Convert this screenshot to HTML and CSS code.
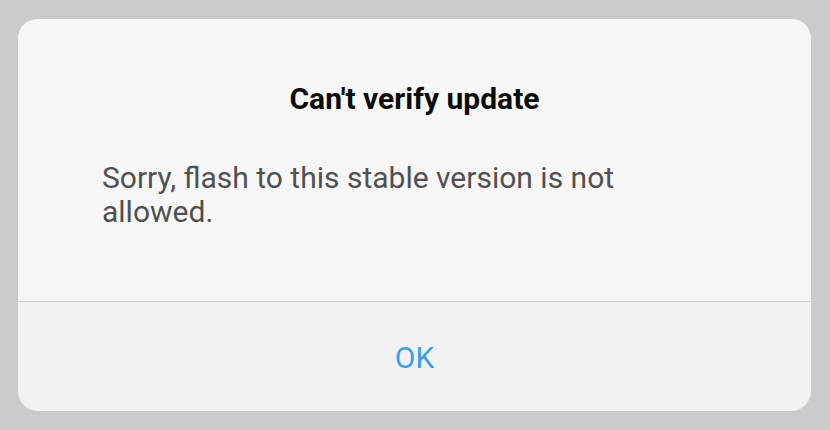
FILE: index.html
```html
<!DOCTYPE html>
<html>
<head>
<meta charset="utf-8">
<link rel="stylesheet" href="styles.css">
</head>
<body>
<div class="dialog">
  <div class="content">
    <h1 class="title">Can't verify update</h1>
    <p class="message">Sorry, flash to this stable version is not allowed.</p>
  </div>
  <div class="actions">
    <button class="ok">OK</button>
  </div>
</div>
</body>
</html>
```
FILE: styles.css
```css
html, body {
  margin: 0;
  padding: 0;
  background: #cbcbcb;
  width: 830px;
  height: 430px;
  overflow: hidden;
  font-family: Roboto, "Noto Sans", sans-serif;
}
.dialog {
  margin: 19px 0 0 18px;
  width: 793px;
  height: 392px;
  border-radius: 20px;
  background: #f2f2f2;
  overflow: hidden;
  display: flex;
  flex-direction: column;
}
.content {
  box-sizing: border-box;
  background: #f7f7f7;
  border-bottom: 1px solid #cfcfcf;
  padding: 62px 90px 0 84px;
  flex: none;
  height: 283px;
}
.title {
  margin: 0;
  font-size: 30px;
  line-height: 36px;
  font-weight: 700;
  color: #0c0c0c;
  text-align: center;
  padding-left: 6px;
}
.message {
  margin: 44px 0 0;
  font-size: 30px;
  line-height: 34px;
  color: #505050;
  font-weight: 400;
  width: 560px;
}
.actions {
  flex: 1;
  display: flex;
  align-items: center;
  justify-content: center;
  padding-top: 2px;
}
.ok {
  border: 0;
  background: none;
  font-family: inherit;
  font-size: 30px;
  line-height: 34px;
  color: #3b9fe6;
  padding: 0;
}
```
